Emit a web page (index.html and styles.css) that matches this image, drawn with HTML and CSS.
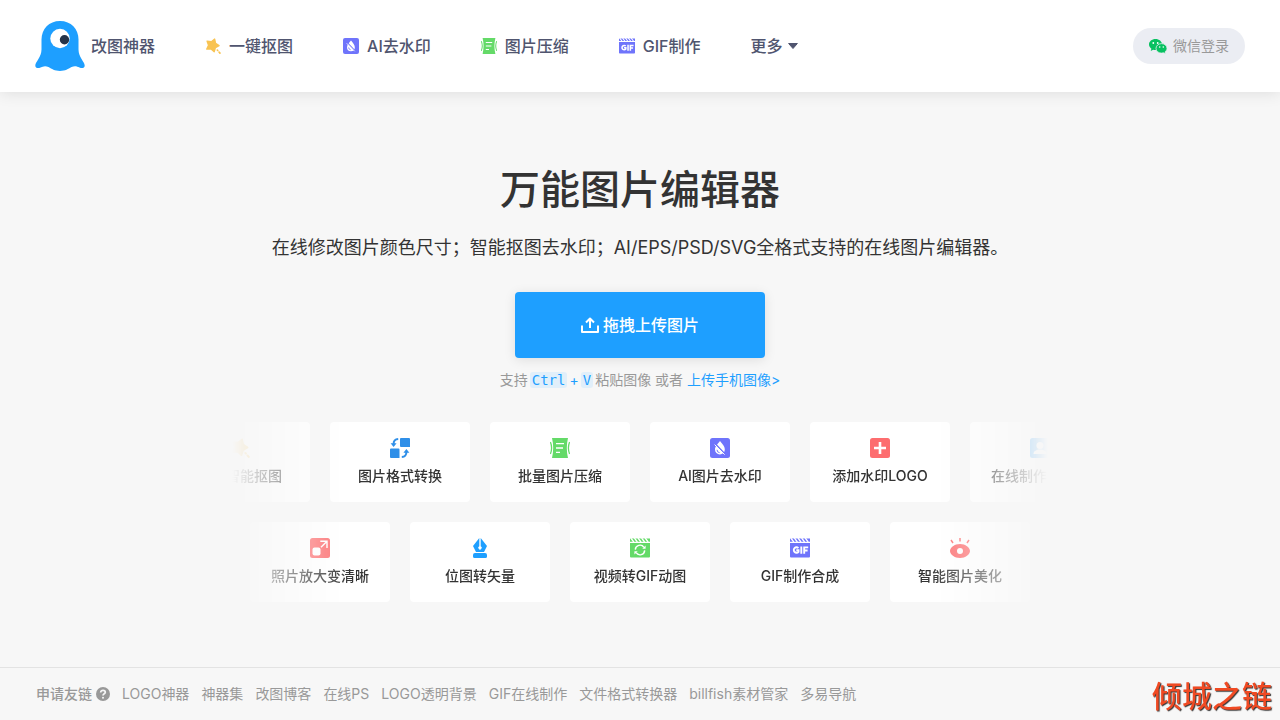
FILE: index.html
```html
<!DOCTYPE html>
<html lang="zh-CN">
<head>
<meta charset="utf-8">
<meta name="viewport" content="width=device-width, initial-scale=1">
<title>改图神器</title>
<link rel="stylesheet" href="styles.css">
</head>
<body>
<svg class="sprite" aria-hidden="true">
  <symbol id="i-star" viewBox="0 0 20 20">
    <path fill="#f8c352" stroke="#f8c352" stroke-width="1.600" stroke-linejoin="round" d="M17.600 9.500L13 12.200 11.500 17.300 7.600 13.700 2.200 13.900 4.400 9 2.600 4 7.900 4.600 12.100 1.300 13.200 6.500z"/>
    <path stroke="#f8c352" stroke-width="2" stroke-linecap="round" d="M15.400 15l.5.600M17.500 17.500l1.200 1.400"/>
  </symbol>
  <symbol id="i-drop" viewBox="0 0 20 20">
    <rect width="20" height="20" rx="2.500" fill="#6f74fb"/>
    <path fill="#fff" d="M10 3c2 2.600 4.800 5 4.800 8.600a4.900 4.900 0 0 1-9.800 0C5 8.200 8 5.600 10 3z"/>
    <path stroke="#6f74fb" stroke-width="1.400" d="M5 5.600l10.500 10.800"/>
    <path stroke="#fff" stroke-width="1" d="M4.600 6.600l10 10"/>
    <path fill="none" stroke="#6f74fb" stroke-width="1" d="M7 11.800a3 3 0 0 0 2.600 2.900"/>
  </symbol>
  <symbol id="i-zip" viewBox="0 0 20 20">
    <path fill="#64da68" d="M2 0h16c-1.600 6.500-1.600 13.500 0 20H2c1.600-6.500 1.600-13.500 0-20z"/>
    <path fill="none" stroke="#64da68" stroke-width="1.300" d="M.4 4c1.600 4 1.600 8 0 12M19.600 4c-1.600 4-1.600 8 0 12"/>
    <path stroke="#fff" stroke-width="1.300" d="M6 5.600h8M6 10h7M6 14.400h4"/>
  </symbol>
  <symbol id="i-gif" viewBox="0 0 20 20">
    <path fill="#6f74fb" d="M0 .6h20v3.200H0zM0 5h20v13.400a1 1 0 0 1-1 1H1a1 1 0 0 1-1-1z"/>
    <path stroke="#fff" stroke-width="1.300" d="M.8 0l3 4M4.400 0l3 4M8 0l3 4M11.600 0l3 4M15.200 0l3 4"/>
    <path fill="none" stroke="#fff" stroke-width="1.900" d="M8.400 10.100a2.700 2.700 0 1 0 .1 3.700v-1.600H6.300M11.300 8.500v7.300M14.200 15.800V9.400h4M14.200 12.500h3.400"/>
  </symbol>
  <symbol id="i-video" viewBox="0 0 20 20">
    <path fill="#64da68" d="M0 .6h20v3.200H0zM0 5h20v13.400a1 1 0 0 1-1 1H1a1 1 0 0 1-1-1z"/>
    <path stroke="#fff" stroke-width="1.300" d="M.8 0l3 4M4.400 0l3 4M8 0l3 4M11.600 0l3 4M15.200 0l3 4"/>
    <path fill="none" stroke="#fff" stroke-width="1.400" d="M5.300 11.600a4.700 4.700 0 0 1 8.600-2.300M14.700 12.400a4.700 4.700 0 0 1-8.600 2.300"/>
    <path fill="#fff" d="M12.300 10.700h3.300V7.400zM7.700 13.300H4.400v3.300z"/>
  </symbol>
  <symbol id="i-convert" viewBox="0 0 20 20">
    <path fill="#2f8fe8" d="M11 0h8a1 1 0 0 1 1 1v8H11a1 1 0 0 1-1-1V1a1 1 0 0 1 1-1zM1 10.500h7.500a1 1 0 0 1 1 1V20H1a1 1 0 0 1-1-1v-7.500a1 1 0 0 1 1-1zM.6 5.200h6L3.600 9zM13.400 14.800h6L16.400 11z"/>
    <path fill="none" stroke="#2f8fe8" stroke-width="2" d="M3.600 6c0-3 1.600-4.800 4.600-5M16.400 14c0 3-1.600 4.800-4.600 5"/>
  </symbol>
  <symbol id="i-plus" viewBox="0 0 20 20">
    <rect width="20" height="20" rx="2.500" fill="#fd6d6f"/>
    <path stroke="#fff" stroke-width="2.600" d="M10 4v12M4 10h12"/>
  </symbol>
  <symbol id="i-idphoto" viewBox="0 0 20 20">
    <rect width="20" height="20" rx="2.500" fill="#2097f5"/>
    <circle cx="10" cy="7.500" r="3.500" fill="#fff"/>
    <path fill="#fff" d="M3.500 16c0-3 3-4.500 6.500-4.500s6.500 1.500 6.500 4.500z"/>
  </symbol>
  <symbol id="i-enlarge" viewBox="0 0 20 20">
    <rect width="20" height="20" rx="2.500" fill="#fd6d6f"/>
    <rect x="2.500" y="9.500" width="8" height="8" rx="2" fill="#fff"/>
    <path fill="none" stroke="#fff" stroke-width="1.400" d="M10.300 3.300h6.700v6.800M17 3.300l-6 6"/>
  </symbol>
  <symbol id="i-pen" viewBox="0 0 20 20">
    <path fill="#1e9fff" d="M9.300 0v8.200a1.700 1.700 0 1 0 1.400 0V0L17 8l-3 6H6L3 8zM5 15h10a2 2 0 0 1 2 2v1.500a1.500 1.500 0 0 1-1.500 1.500h-11A1.500 1.500 0 0 1 3 18.500V17a2 2 0 0 1 2-2z"/>
  </symbol>
  <symbol id="i-eye" viewBox="0 0 20 20">
    <path fill="#fd6d6f" fill-rule="evenodd" d="M10 6c5.500 0 10 3.400 10 7s-4.500 7-10 7-10-3.400-10-7 4.500-7 10-7zm0 4a3 3 0 1 0 0 6 3 3 0 0 0 0-6z"/>
    <path stroke="#fd6d6f" stroke-width="1.500" d="M1 2l2 3M10 0v3.500M19 2l-2 3"/>
  </symbol>
</svg>

<header class="header">
  <nav class="nav">
    <a class="brand" href="#">
      <svg class="brand-logo" viewBox="0 0 50 50" aria-hidden="true">
        <path fill="#1e9fff" d="M25 0C14 0 6.500 8 6.500 18.500v10C6.500 36 .3 41 .3 44.500c0 2.500 2.700 3.300 5.200 2 2.500-1.300 5-2 8-.4 3.500 2 6 3.900 11.500 3.900s8-1.900 11.500-3.900c3-1.600 5.500-.9 8 .4 2.500 1.300 5.200.5 5.200-2 0-3.500-6.200-8.500-6.200-16v-10C43.500 8 36 0 25 0z"/>
        <circle cx="25" cy="17.500" r="9.700" fill="#fff"/>
        <circle cx="29.500" cy="18.700" r="4.700" fill="#253349"/>
      </svg>改图神器</a>
    <a class="nav-link" href="#"><svg class="icon-s" aria-hidden="true"><use href="#i-star"/></svg>一键抠图</a>
    <a class="nav-link" href="#"><svg class="icon-s" aria-hidden="true"><use href="#i-drop"/></svg>AI去水印</a>
    <a class="nav-link" href="#"><svg class="icon-s" aria-hidden="true"><use href="#i-zip"/></svg>图片压缩</a>
    <a class="nav-link" href="#"><svg class="icon-s" aria-hidden="true"><use href="#i-gif"/></svg>GIF制作</a>
    <button class="more" type="button">更多<svg class="caret" viewBox="0 0 10 6" aria-hidden="true"><path fill="currentColor" stroke="currentColor" stroke-linejoin="round" d="M.6.5h8.800L5 5.500z"/></svg></button>
  </nav>
  <button class="login" type="button">
    <svg class="wechat" viewBox="0 0 18 15" aria-hidden="true">
      <path fill="#07c160" d="M6.500 0C2.900 0 0 2.400 0 5.500c0 1.700.9 3.200 2.400 4.200L1.700 12l2.500-1.300c.7.200 1.500.3 2.300.3C10.100 11 13 8.600 13 5.500S10.100 0 6.500 0z"/>
      <path fill="#07c160" stroke="#ebedf3" stroke-width=".8" d="M12.500 4.600c-3.100 0-5.500 2.100-5.500 4.800s2.400 4.700 5.500 4.700c.7 0 1.300-.1 1.900-.3l2.100 1-.5-1.900c1.200-.9 2-2.100 2-3.500 0-2.700-2.400-4.800-5.500-4.800z"/>
      <g fill="#fff"><circle cx="4.300" cy="4" r=".9"/><circle cx="8.700" cy="4" r=".9"/><circle cx="10.700" cy="8" r=".8"/><circle cx="14.300" cy="8" r=".8"/></g>
    </svg>微信登录</button>
</header>

<main class="main">
  <h1 class="title">万能图片编辑器</h1>
  <p class="subtitle">在线修改图片颜色尺寸；智能抠图去水印；AI/EPS/PSD/SVG全格式支持的在线图片编辑器。</p>
  <button class="upload" type="button">
    <svg class="upload-icon" viewBox="0 0 18 16" aria-hidden="true"><path fill="none" stroke="#fff" stroke-width="2" stroke-linejoin="round" d="M1 8.500V15h16V8.500M9 11V2M5 5.500l4-4 4 4"/></svg>拖拽上传图片</button>
  <p class="hint">支持<kbd class="key">Ctrl</kbd><span class="plus">+</span><kbd class="key">V</kbd>粘贴图像 或者 <a class="hint-link" href="#">上传手机图像&gt;</a></p>

  <section class="tools" aria-label="工具">
    <div class="row">
      <a class="card" href="#"><svg class="icon" aria-hidden="true"><use href="#i-star"/></svg>在线智能抠图</a>
      <a class="card" href="#"><svg class="icon" aria-hidden="true"><use href="#i-convert"/></svg>图片格式转换</a>
      <a class="card" href="#"><svg class="icon" aria-hidden="true"><use href="#i-zip"/></svg>批量图片压缩</a>
      <a class="card" href="#"><svg class="icon" aria-hidden="true"><use href="#i-drop"/></svg>AI图片去水印</a>
      <a class="card" href="#"><svg class="icon" aria-hidden="true"><use href="#i-plus"/></svg>添加水印LOGO</a>
      <a class="card" href="#"><svg class="icon" aria-hidden="true"><use href="#i-idphoto"/></svg>在线制作证件照</a>
    </div>
    <div class="row">
      <a class="card" href="#"><svg class="icon" aria-hidden="true"><use href="#i-enlarge"/></svg>照片放大变清晰</a>
      <a class="card" href="#"><svg class="icon" aria-hidden="true"><use href="#i-pen"/></svg>位图转矢量</a>
      <a class="card" href="#"><svg class="icon" aria-hidden="true"><use href="#i-video"/></svg>视频转GIF动图</a>
      <a class="card" href="#"><svg class="icon" aria-hidden="true"><use href="#i-gif"/></svg>GIF制作合成</a>
      <a class="card" href="#"><svg class="icon" aria-hidden="true"><use href="#i-eye"/></svg>智能图片美化</a>
    </div>
  </section>
</main>

<footer class="footer">
  <a class="apply" href="#">申请友链<svg class="help" viewBox="0 0 14 14" aria-hidden="true"><circle cx="7" cy="7" r="7" fill="#999"/><path fill="none" stroke="#f6f6f6" stroke-width="1.700" d="M4.700 5.500c0-1.400 1-2.200 2.300-2.200s2.300.8 2.300 2c0 1.500-2.300 1.500-2.300 3.200"/><circle cx="7" cy="10.700" r="1" fill="#f6f6f6"/></svg></a>
  <a href="#">LOGO神器</a>
  <a href="#">神器集</a>
  <a href="#">改图博客</a>
  <a href="#">在线PS</a>
  <a href="#">LOGO透明背景</a>
  <a href="#">GIF在线制作</a>
  <a href="#">文件格式转换器</a>
  <a href="#">billfish素材管家</a>
  <a href="#">多易导航</a>
</footer>
<div class="watermark">倾城之链</div>
</body>
</html>
```

FILE: styles.css
```css
* { box-sizing: border-box; }
body {
  margin: 0;
  min-height: 100vh;
  display: flex;
  flex-direction: column;
  background: #f7f7f7;
  color: #333;
  font: 14px/20px Inter, "Noto Sans CJK SC", sans-serif;
}
a { color: inherit; text-decoration: none; }
button { border: 0; background: none; padding: 0; font: inherit; color: inherit; cursor: pointer; }
.sprite { position: absolute; width: 0; height: 0; }

.header {
  display: flex;
  align-items: center;
  justify-content: space-between;
  padding: 21px 35px;
  background: #fff;
  box-shadow: 0 0 16px rgba(0, 0, 0, 0.12);
}
.nav {
  display: flex;
  align-items: center;
  gap: 50px;
  color: #50556f;
  font-size: 16px;
  line-height: 24px;
  font-weight: 500;
}
.brand { display: flex; align-items: center; gap: 6px; }
.brand-logo { width: 50px; height: 50px; }
.nav-link { display: flex; align-items: center; gap: 8px; }
.icon-s { width: 16px; height: 16px; }
.more { display: flex; align-items: center; gap: 5px; }
.caret { width: 10px; height: 6px; }
.login {
  display: flex;
  align-items: center;
  gap: 6px;
  height: 36px;
  padding: 0 16px;
  border-radius: 18px;
  background: #ebedf3;
  color: #999;
  font-size: 14px;
}
.wechat { width: 18px; height: 15px; }

.main {
  flex: 1;
  display: flex;
  flex-direction: column;
  align-items: center;
  padding: 68px 20px 0;
}
.title { margin: 0; font-size: 40px; line-height: 60px; font-weight: 500; }
.subtitle { margin: 14px 0 0; font-size: 18px; line-height: 28px; }
.upload {
  display: flex;
  align-items: center;
  justify-content: center;
  gap: 4px;
  width: 250px;
  height: 66px;
  margin-top: 30px;
  border-radius: 4px;
  background: #1e9fff;
  box-shadow: 0 2px 12px rgba(0, 0, 0, 0.1);
  color: #fff;
  font-size: 16px;
  font-weight: 500;
}
.upload-icon { width: 18px; height: 16px; }
.hint { margin: 12px 0 0; color: #999; }
.key {
  margin: 0 2px;
  padding: 0 2px;
  border-radius: 3px;
  background: #e1effa;
  color: #1e9fff;
  font: 14px/20px "DejaVu Sans Mono", monospace;
}
.plus, .hint-link { color: #1e9fff; }

.tools {
  width: 100%;
  max-width: 816px;
  display: grid;
  gap: 20px;
  margin-top: 32px;
  overflow: hidden;
  -webkit-mask-image: linear-gradient(90deg, transparent, #000 120px, #000 calc(100% - 120px), transparent);
  mask-image: linear-gradient(90deg, transparent, #000 120px, #000 calc(100% - 120px), transparent);
}
.row { display: flex; justify-content: center; gap: 20px; min-width: 0; }
.card {
  flex: none;
  width: 140px;
  height: 80px;
  display: flex;
  flex-direction: column;
  align-items: center;
  gap: 8px;
  padding-top: 16px;
  border-radius: 4px;
  background: #fff;
  font-weight: 500;
}
.icon { width: 20px; height: 20px; }

.footer {
  display: flex;
  align-items: center;
  gap: 12px;
  padding: 16px 36px;
  border-top: 1px solid #e3e3e3;
  color: #999;
}
.apply { display: flex; align-items: center; gap: 4px; font-weight: 500; }
.help { width: 14px; height: 14px; }
.watermark {
  position: fixed;
  right: 8px;
  bottom: 4px;
  color: #f04a23;
  font-size: 30px;
  line-height: 40px;
  font-weight: 500;
  text-shadow: 1px 1px 1px #333;
}
```
